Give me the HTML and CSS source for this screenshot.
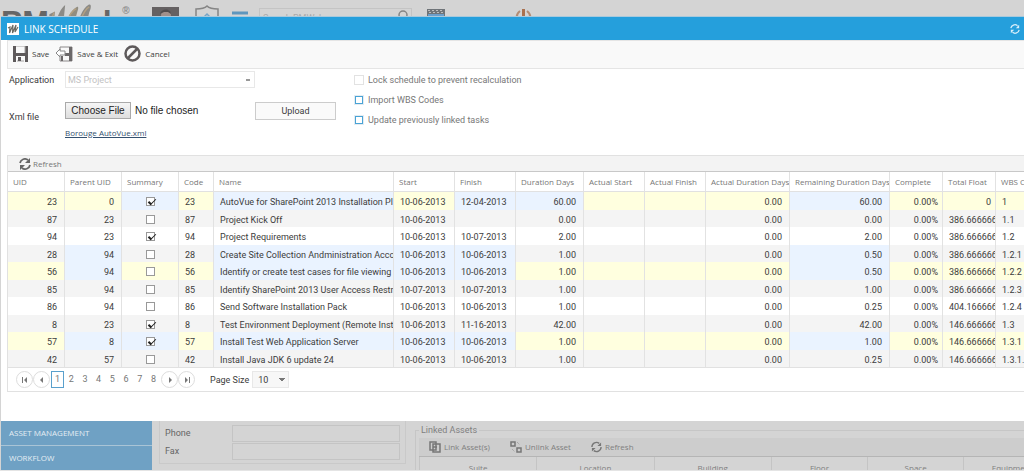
FILE: index.html
```html
<!DOCTYPE html>
<html lang="en">
<head>
    <meta charset="UTF-8">
    <meta name="viewport" content="width=device-width, initial-scale=1.0">
    <title>Link Schedule</title>
    <link rel="stylesheet" href="styles.css">
</head>
<body>

<div class="page">
    <header class="topbar">
        <div class="logo">
            <span>PM</span>
            <svg class="logo-mark" width="50" height="34" viewBox="0 0 54 34" aria-hidden="true">
                <path d="M8 14 L14 11 L12 34 L7 34 Z M12 34 C15 20 19 10 23 6 L25 4 L22 34 Z" fill="#8b8a86"/>
                <path d="M22 34 C26 20 31 9 38 6 C40 6 39 9 38 12 L32 34 Z" fill="#918d80"/>
                <path d="M36 34 C39 20 44 7 50 4 C54 2 53 8 51 12 L46 34 Z" fill="#8b8a86"/>
                <path d="M10 20 L13 12 M27 22 C30 14 33 10 37 8 M41 22 C44 14 47 8 51 6" fill="none" stroke="#b3a081" stroke-width="1.5"/>
            </svg>
            <span>eb</span><sup>®</sup>
        </div>
        <svg class="avatar" width="27" height="27" viewBox="0 0 27 27" aria-hidden="true">
            <rect width="27" height="27" fill="#656162"/>
            <circle cx="14" cy="8" r="5" fill="#a1908b"/>
            <path d="M8 7 C9 1 19 1 19 7 L16 5 L12 5 Z" fill="#514c4d"/>
            <path d="M4 27 C5 14 23 14 24 27 Z" fill="#8a8283"/>
        </svg>
        <svg class="shield" width="24" height="27" viewBox="0 0 24 27" aria-hidden="true">
            <path d="M12 1 C9 4 5 4 1 4 V15 C2 21 7 24 12 26 C17 24 22 21 23 15 V4 C19 4 15 4 12 1 Z" fill="none" stroke="#858585" stroke-width="1.5"/>
            <path d="M9 12 L12 9 L15 12" fill="none" stroke="#77a4c4" stroke-width="1.5"/>
        </svg>
        <svg class="lines" width="16" height="16" viewBox="0 0 16 16" aria-hidden="true">
            <path d="M0 2 H16 M0 8 H16 M0 14 H16" stroke="#5f96bd" stroke-width="3"/>
        </svg>
        <div class="search">
            <input type="text" placeholder="Search PMWeb..." aria-label="Search">
            <svg width="12" height="16" viewBox="0 0 12 16" aria-hidden="true">
                <circle cx="6" cy="6" r="4" fill="none" stroke="#858585" stroke-width="1.5"/>
                <path d="M3 10 L0 15" stroke="#858585" stroke-width="1.5"/>
            </svg>
        </div>
        <svg class="calendar" width="18" height="18" viewBox="0 0 18 18" aria-hidden="true">
            <rect width="18" height="18" fill="#6f7478"/>
            <path d="M1 1.500 H17 M2 3.500 H17" stroke="#bdbdbd" stroke-dasharray="2 2"/>
            <rect x="1" y="5" width="16" height="12" fill="#6d9fcb"/>
        </svg>
        <svg class="power" width="17" height="17" viewBox="0 0 17 17" aria-hidden="true">
            <path d="M5 2 A8 8 0 0 0 5 15 M12 2 A8 8 0 0 1 12 15" fill="none" stroke="#b38c74" stroke-width="2"/>
            <path d="M8.500 0 V9" stroke="#a9714f" stroke-width="3"/>
        </svg>
    </header>

    <div class="workspace">
        <nav class="sidebar">
            <a href="#">ASSET MANAGEMENT</a>
            <a href="#">WORKFLOW</a>
        </nav>
        <div class="contact">
            <div class="contact-row">
                <label for="phone">Phone</label>
                <input type="text" id="phone">
            </div>
            <div class="contact-row">
                <label for="fax">Fax</label>
                <input type="text" id="fax">
            </div>
        </div>
        <fieldset class="assets">
            <legend>Linked Assets</legend>
            <div class="assets-bar">
                <button type="button">
                    <svg width="12" height="12" viewBox="0 0 12 12" aria-hidden="true"><path d="M1 1 H7 V9 H1 Z M4 3 H11 V11 H4 Z M4 6 H8" fill="none" stroke="#777" stroke-width="1.5"/></svg>
                    Link Asset(s)
                </button>
                <button type="button">
                    <svg width="12" height="12" viewBox="0 0 12 12" aria-hidden="true"><path d="M1 1 H5 V5 H1 Z M7 7 H11 V11 H7 Z" fill="none" stroke="#777" stroke-width="1.5"/><path d="M7 1 L10 4 M2 8 L5 11" stroke="#999" stroke-dasharray="1 1"/></svg>
                    Unlink Asset
                </button>
                <button type="button">
                    <svg width="11" height="12" viewBox="0 0 12 12" aria-hidden="true"><path d="M1 6 A5 5 0 0 1 9 2 M11 6 A5 5 0 0 1 3 10" fill="none" stroke="#777" stroke-width="1.500"/><path d="M11 1 V5 H7 Z M1 11 V7 H5 Z" fill="#777"/></svg>
                    Refresh
                </button>
            </div>
            <table class="assets-table">
                <colgroup><col class="w-wide"><col class="w-wide"><col class="w-wide"><col class="w-mid"><col class="w-mid"><col class="w-mid"></colgroup>
                <thead>
                    <tr><th>Suite</th><th>Location</th><th>Building</th><th>Floor</th><th>Space</th><th>Equipment</th></tr>
                </thead>
            </table>
        </fieldset>
    </div>
</div>

<div class="dialog" role="dialog" aria-labelledby="dialog-title">
    <div class="dialog-head">
        <svg width="12" height="12" viewBox="0 0 12 12" aria-hidden="true">
            <rect width="12" height="12" fill="#fff"/>
            <path d="M1 5 L3 4 L2.500 10 L6 2 L5.500 10 L9 2 L8 9 L11 4" fill="none" stroke="#6b6a62" stroke-width="1.200"/>
        </svg>
        <h1 id="dialog-title">LINK SCHEDULE</h1>
        <button type="button" aria-label="Reload">
            <svg width="10" height="10" viewBox="0 0 12 12" aria-hidden="true"><path d="M1 5 A5 5 0 0 1 9 2 M11 7 A5 5 0 0 1 3 10" fill="none" stroke="#d8eefa" stroke-width="1.500"/><path d="M11 1 V5 H7 Z M1 11 V7 H5 Z" fill="#d8eefa"/></svg>
        </button>
    </div>

    <div class="toolbar">
        <button type="button">
            <svg width="15" height="16" viewBox="0 0 15 16" aria-hidden="true"><path d="M0 0 H3 V7 H12 V0 H15 V16 H12 V10 H3 V16 H0 Z" fill="#5e5a5b"/><path d="M3 0 H12 V7 M4 15 H11" fill="none" stroke="#a5a3a3"/><path d="M5 11 H8 V15 H5 Z" fill="#5e5a5b"/></svg>
            Save
        </button>
        <button type="button">
            <svg width="18" height="16" viewBox="0 0 18 16" aria-hidden="true"><path d="M5 4 V1 H17 V15 H5 V11" fill="none" stroke="#8b8889"/><path d="M14 1 H17 V15 H14 V10 H8 V15 H6 V10 H10 V7 H14 Z" fill="#6b6869"/><path d="M1 7 L5 3 V5 H10 V9 H5 V11 Z" fill="#fff" stroke="#888"/></svg>
            Save &amp; Exit
        </button>
        <button type="button">
            <svg width="17" height="17" viewBox="0 0 17 17" aria-hidden="true"><circle cx="8.500" cy="8.500" r="7" fill="none" stroke="#5e5a5b" stroke-width="2.500"/><path d="M4 13 L13 4" stroke="#5e5a5b" stroke-width="2.500"/></svg>
            Cancel
        </button>
    </div>

    <form class="settings">
        <div class="fields">
            <label for="application">Application</label>
            <select id="application" disabled><option>MS Project</option></select>
            <label for="xml-file">Xml file</label>
            <div class="file-row">
                <input type="file" id="xml-file">
                <button type="button" class="upload-btn">Upload</button>
            </div>
            <a class="file-link" href="#">Borouge AutoVue.xml</a>
        </div>
        <div class="options">
            <label class="off"><input type="checkbox" disabled> Lock schedule to prevent recalculation</label>
            <label><input type="checkbox"> Import WBS Codes</label>
            <label><input type="checkbox"> Update previously linked tasks</label>
        </div>
    </form>

    <div class="grid">
        <div class="grid-bar">
            <button type="button">
                <svg width="12" height="12" viewBox="0 0 12 12" aria-hidden="true"><path d="M1 5 A5 5 0 0 1 9 2 M11 7 A5 5 0 0 1 3 10" fill="none" stroke="#666" stroke-width="1.800"/><path d="M11 0 V5 H6 Z M1 12 V7 H6 Z" fill="#666"/></svg>
                Refresh
            </button>
        </div>
        <div class="grid-scroll">
            <table class="tasks">
                <colgroup>
                    <col class="c-uid"><col class="c-uid"><col class="c-uid"><col class="c-code"><col class="c-name">
                    <col class="c-date"><col class="c-date"><col class="c-duration"><col class="c-date"><col class="c-date">
                    <col class="c-actual"><col class="c-remaining"><col class="c-small"><col class="c-small"><col class="c-small">
                </colgroup>
                <thead>
                    <tr>
                        <th>UID</th><th>Parent UID</th><th>Summary</th><th>Code</th><th>Name</th>
                        <th>Start</th><th>Finish</th><th>Duration Days</th><th>Actual Start</th><th>Actual Finish</th>
                        <th>Actual Duration Days</th><th>Remaining Duration Days</th><th>Complete</th><th>Total Float</th><th>WBS Code</th>
                    </tr>
                </thead>
                <tbody id="task-rows"></tbody>
            </table>
        </div>
        <div class="pager">
            <button type="button" class="round" aria-label="First page"><svg width="6" height="6" viewBox="0 0 6 6"><path d="M0 0 H1 V6 H0 Z M5 0 V6 L2 3 Z" fill="#777"/></svg></button>
            <button type="button" class="round" aria-label="Previous page"><svg width="6" height="6" viewBox="0 0 6 6"><path d="M4 0 V6 L1 3 Z" fill="#777"/></svg></button>
            <div class="page-list">
                <a class="current" href="#">1</a><a href="#">2</a><a href="#">3</a><a href="#">4</a><a href="#">5</a><a href="#">6</a><a href="#">7</a><a href="#">8</a>
            </div>
            <button type="button" class="round" aria-label="Next page"><svg width="6" height="6" viewBox="0 0 6 6"><path d="M2 0 V6 L5 3 Z" fill="#777"/></svg></button>
            <button type="button" class="round" aria-label="Last page"><svg width="6" height="6" viewBox="0 0 6 6"><path d="M1 0 V6 L4 3 Z M5 0 H6 V6 H5 Z" fill="#777"/></svg></button>
            <label class="size-label" for="page-size">Page Size</label>
            <select id="page-size"><option>10</option></select>
        </div>
    </div>
</div>

<script>
    // uid, parent, summary, name, start, finish, duration, remaining, float, wbs, row type, changed columns
    const tasks = [
        [23, 0, true, "AutoVue for SharePoint 2013 Installation Plan", "10-06-2013", "12-04-2013", "60.00", "60.00", "0", "1", "marked", [2, 4, 6, 7, 11]],
        [87, 23, false, "Project Kick Off", "10-06-2013", "", "0.00", "0.00", "386.6666666", "1.1", "alt", []],
        [94, 23, true, "Project Requirements", "10-06-2013", "10-07-2013", "2.00", "2.00", "386.6666666", "1.2", "", []],
        [28, 94, false, "Create Site Collection Andministration Account", "10-06-2013", "10-06-2013", "1.00", "0.50", "386.6666666", "1.2.1", "alt", [1, 4, 5, 6, 11]],
        [56, 94, false, "Identify or create test cases for file viewing in", "10-06-2013", "10-06-2013", "1.00", "0.50", "386.6666666", "1.2.2", "marked", [1, 4, 5, 6, 11]],
        [85, 94, false, "Identify SharePoint 2013 User Access Restrict", "10-07-2013", "10-07-2013", "1.00", "1.00", "386.6666666", "1.2.3", "alt", []],
        [86, 94, false, "Send Software Installation Pack", "10-06-2013", "10-06-2013", "1.00", "0.25", "404.1666666", "1.2.4", "", []],
        [8, 23, true, "Test Environment Deployment (Remote Install", "10-06-2013", "11-16-2013", "42.00", "42.00", "146.6666666", "1.3", "alt", []],
        [57, 8, true, "Install Test Web Application Server", "10-06-2013", "10-06-2013", "1.00", "1.00", "146.6666666", "1.3.1", "marked", [1, 2, 4, 5, 6, 11]],
        [42, 57, false, "Install Java JDK 6 update 24", "10-06-2013", "10-06-2013", "1.00", "0.25", "146.6666666", "1.3.1.1", "alt", []]
    ];
    const numberColumns = [0, 1, 7, 10, 11];

    function showTasks() {
        const body = document.getElementById("task-rows");

        tasks.forEach(task => {
            const [uid, parent, summary, name, start, finish, duration, remaining, float, wbs, type, changed] = task;
            const cells = [uid, parent, summary, uid, name, start, finish, duration, "", "", "0.00", remaining, "0.00%", float, wbs];
            const row = document.createElement("tr");
            if (type) row.classList.add(type);

            cells.forEach((value, i) => {
                const cell = document.createElement("td");
                if (i === 2) {
                    const box = document.createElement("input");
                    box.type = "checkbox";
                    box.checked = value;
                    box.setAttribute("aria-label", "Summary task " + uid);
                    cell.classList.add("check");
                    cell.appendChild(box);
                } else {
                    cell.innerText = value;
                }
                if (numberColumns.includes(i)) cell.classList.add("number");
                if (i === 12 || i === 13) cell.classList.add("number", "tight");
                if (changed.includes(i)) cell.classList.add("changed");
                row.appendChild(cell);
            });
            body.appendChild(row);
        });
    }

    showTasks();
</script>

</body>
</html>
```

FILE: styles.css
```css
* {
    box-sizing: border-box;
}
body {
    margin: 0;
    font-family: Roboto, "Open Sans", sans-serif;
    font-size: 9px;
    line-height: 12px;
    color: #3c3c3c;
    background-color: #d4d4d4;
    overflow: hidden;
}
button, input, select {
    font-family: inherit;
    font-size: inherit;
    line-height: inherit;
    color: inherit;
    margin: 0;
}
button {
    border: none;
    background: none;
    padding: 0;
    display: flex;
    align-items: center;
    gap: 4px;
    cursor: pointer;
    white-space: nowrap;
}
svg {
    display: block;
    flex: none;
}
.toolbar, .sidebar, .assets-bar, .assets-table, .grid-bar, .tasks th, .file-link {
    font-family: "Open Sans", "Noto Sans", sans-serif;
    font-size: 8px;
}

/* page behind the dialog */
.page {
    height: 100vh;
    overflow: hidden;
    border-bottom: 1px solid #e4e4e4;
}
.topbar {
    display: flex;
    align-items: flex-start;
    height: 48px;
}
.logo {
    display: flex;
    width: 152px;
    padding: 5px 0 0 1px;
    font: bold 32px/34px "Liberation Sans", sans-serif;
    color: #666;
}
.logo-mark {
    margin: -5px -7px 0 -7px;
}
.logo sup {
    font-size: 10px;
    line-height: 10px;
    padding-top: 1px;
    color: #8a8a8a;
}
.avatar {
    margin-top: 7px;
}
.shield {
    margin: 5px 0 0 16px;
}
.lines {
    margin: 11px 0 0 13px;
}
.search {
    display: flex;
    align-items: center;
    width: 153px;
    height: 18px;
    margin: 8px 0 0 11px;
    padding-right: 2px;
    border: 1px solid #c4c4c4;
}
.search input {
    flex: 1;
    min-width: 0;
    border: none;
    background: none;
    padding: 5px 3px 3px;
}
.search input::placeholder {
    color: #aaa;
}
.calendar {
    margin: 9px 0 0 15px;
}
.power {
    margin: 9px 0 0 70px;
}
.workspace {
    display: flex;
    padding: 373px 0 0 1px;
}
.sidebar {
    width: 151px;
}
.sidebar a {
    display: block;
    height: 25px;
    padding: 6px 8px;
    border-bottom: 1px solid #a9c4d6;
    background-color: #6fa1c4;
    color: #e4edf3;
    text-decoration: none;
}
.contact {
    width: 247px;
    height: 43px;
    margin-left: 7px;
    padding: 3px 5px;
    border: 1px solid #c9c9c9;
    border-top: none;
    color: #666;
}
.contact-row {
    display: flex;
    align-items: center;
    height: 18px;
}
.contact-row label {
    width: 67px;
}
.contact-row input {
    flex: 1;
    height: 17px;
    border: 1px solid #c4c4c4;
    background: none;
}
.assets {
    flex: 1;
    min-width: 0;
    margin: 3px 0 0 9px;
    padding: 2px 0 0 3px;
    border: 1px solid #c6c6c6;
    border-right: none;
    color: #808080;
}
.assets legend {
    padding: 0 2px;
}
.assets-bar {
    display: flex;
    align-items: center;
    gap: 20px;
    height: 19px;
    padding-left: 10px;
    background-color: #cdcdcd;
    border-bottom: 1px solid #b5b5b5;
}
.assets-bar button {
    gap: 3px;
}
.assets-table {
    width: 641px;
    table-layout: fixed;
    border-collapse: collapse;
}
.assets-table th {
    height: 20px;
    padding: 2px 0 0;
    border-left: 1px solid #c4c4c4;
    font-weight: normal;
    white-space: nowrap;
}
.w-wide {
    width: 117px;
}
.w-mid {
    width: 96px;
}

/* dialog */
.dialog {
    position: absolute;
    top: 16px;
    left: 1px;
    right: 0;
    padding-bottom: 29px;
    border-top: 1px solid #a9c9dc;
    background-color: #fff;
}
.dialog-head {
    display: flex;
    align-items: center;
    gap: 5px;
    height: 23px;
    padding: 0 4px 0 6px;
    background-color: #259fdc;
    color: #fff;
}
.dialog-head h1 {
    flex: 1;
    margin: 0;
    padding-top: 1px;
    font-family: "Open Sans", sans-serif;
    font-size: 10px;
    font-weight: normal;
    line-height: 16px;
}
.toolbar {
    display: flex;
    align-items: center;
    gap: 6px;
    height: 29px;
    margin-left: 6px;
    padding: 0 0 2px 5px;
    border: 1px solid #e5e5e5;
    border-right: none;
    background-color: #f9f9f9;
}
.settings {
    display: flex;
    gap: 18px;
    padding: 2px 8px 0;
}
.fields {
    display: grid;
    grid-template-columns: 56px 271px;
    grid-template-rows: 17px 14px 17px 8px 12px;
    align-items: center;
}
.fields label[for="xml-file"] {
    grid-row: 3 / 5;
    align-self: end;
    padding-bottom: 4px;
}
.fields select {
    grid-column: 2;
    width: 190px;
    height: 17px;
    padding: 0 16px 0 2px;
}
select {
    appearance: none;
    border: 1px solid #e8e8e8;
    border-radius: 0;
    background-color: transparent;
    background-image: linear-gradient(45deg, transparent 50%, #777 50%), linear-gradient(-45deg, transparent 50%, #777 50%);
    background-repeat: no-repeat;
    background-position: right 6px center, right 3px center;
    background-size: 3px 4px;
}
select:disabled {
    color: #c2c2c2;
    opacity: 1;
    background-size: 2px 2px;
    background-position: right 6px center, right 4px center;
}
.file-row {
    grid-column: 2;
    grid-row: 3;
    display: flex;
    justify-content: space-between;
}
.file-row input {
    width: 170px;
    height: 17px;
    font: 10px/12px "Liberation Sans", Arial, sans-serif;
    color: #222;
}
.file-row input::file-selector-button {
    width: 66px;
    height: 17px;
    margin: 0 4px 0 0;
    padding: 1px 0 0;
    border: 1px solid #aaa;
    background: linear-gradient(#f6f6f6, #dedede);
    font: inherit;
    color: #222;
}
.upload-btn {
    justify-content: center;
    width: 81px;
    height: 18px;
    border: 1px solid #ccc;
    background-color: #fafafa;
}
.file-link {
    grid-column: 2;
    grid-row: 5;
    color: #34506f;
}
.options {
    display: flex;
    flex-direction: column;
    gap: 8px;
    padding-top: 3px;
    color: #777;
}
.options label {
    display: flex;
    align-items: center;
    gap: 4px;
}
input[type="checkbox"] {
    appearance: none;
    display: block;
    width: 9px;
    height: 9px;
    border: 1px solid #999;
    background-color: #fff;
}
.options input[type="checkbox"] {
    width: 8px;
    height: 8px;
    margin: 0 1px;
    border-color: #4aa3d5;
    outline: 1px solid #e4ecf2;
}
.options .off input[type="checkbox"] {
    border-color: #fff;
    outline-color: #e2e2e2;
}

/* tasks grid */
.grid {
    margin: 16px 0 0 6px;
    border: 1px solid #e1e1e1;
    border-right: none;
}
.grid-bar {
    display: flex;
    align-items: center;
    height: 16px;
    padding-left: 11px;
    border-bottom: 1px solid #c8c8c8;
    background-color: #f3f3f3;
    color: #777;
}
.grid-bar button {
    gap: 2px;
}
.grid-scroll {
    overflow: hidden;
}
.tasks {
    width: 1040px;
    table-layout: fixed;
    border-collapse: separate;
    border-spacing: 0;
}
.tasks th, .tasks td {
    overflow: hidden;
    white-space: nowrap;
    border-right: 1px solid #e2e2e2;
}
.tasks th {
    height: 20px;
    padding: 1px 0 0 5px;
    border-bottom: 1px solid #e1e1e1;
    font-weight: normal;
    text-align: left;
    color: #777;
}
.tasks td {
    height: 18px;
    padding: 2px 0 0 6px;
}
.tasks tr:nth-child(even) td {
    height: 17px;
}
.tasks .alt {
    background-color: #f4f4f4;
}
.tasks .marked {
    background-color: #ffffdf;
}
.tasks .changed {
    background-color: #eaf3ff;
}
.tasks .number {
    padding-right: 7px;
    text-align: right;
}
.tasks .tight {
    padding-right: 4px;
}
.tasks .check {
    padding: 1px 0 0;
}
.check input {
    margin: 0 auto;
}
.check input:checked::before {
    content: "";
    display: block;
    width: 6px;
    height: 3px;
    margin: 1px;
    border: solid #222;
    border-width: 0 0 1px 2px;
    transform: rotate(-45deg);
}
.c-uid {
    width: 57px;
}
.c-code {
    width: 35px;
}
.c-name {
    width: 180px;
}
.c-date {
    width: 61px;
}
.c-duration {
    width: 68px;
}
.c-actual {
    width: 84px;
}
.c-remaining {
    width: 100px;
}
.c-small {
    width: 53px;
}

/* pager */
.pager {
    display: flex;
    align-items: center;
    height: 24px;
    padding-left: 8px;
    border-top: 1px solid #e1e1e1;
}
.round {
    justify-content: center;
    width: 17px;
    height: 17px;
    border: 1px solid #ddd;
    border-radius: 50%;
}
.page-list {
    display: flex;
    justify-content: space-between;
    width: 109px;
    margin: 0 1px;
}
.page-list a {
    width: 13px;
    height: 17px;
    line-height: 17px;
    text-align: center;
    color: #777;
    text-decoration: none;
}
.page-list .current {
    border: 1px solid #5aa0cc;
    line-height: 15px;
}
.size-label {
    margin: 0 3px 0 15px;
}
#page-size {
    width: 37px;
    height: 17px;
    padding: 0 5px;
    background-color: #f7f7f7;
    background-image: linear-gradient(-135deg, transparent 50%, #777 50%), linear-gradient(135deg, transparent 50%, #777 50%);
    background-image: linear-gradient(to bottom left, #777 50%, transparent 50%), linear-gradient(to bottom right, #777 50%, transparent 50%);
}
.fields select {
    background-image: linear-gradient(#999, #999), linear-gradient(#999, #999);
}
```
